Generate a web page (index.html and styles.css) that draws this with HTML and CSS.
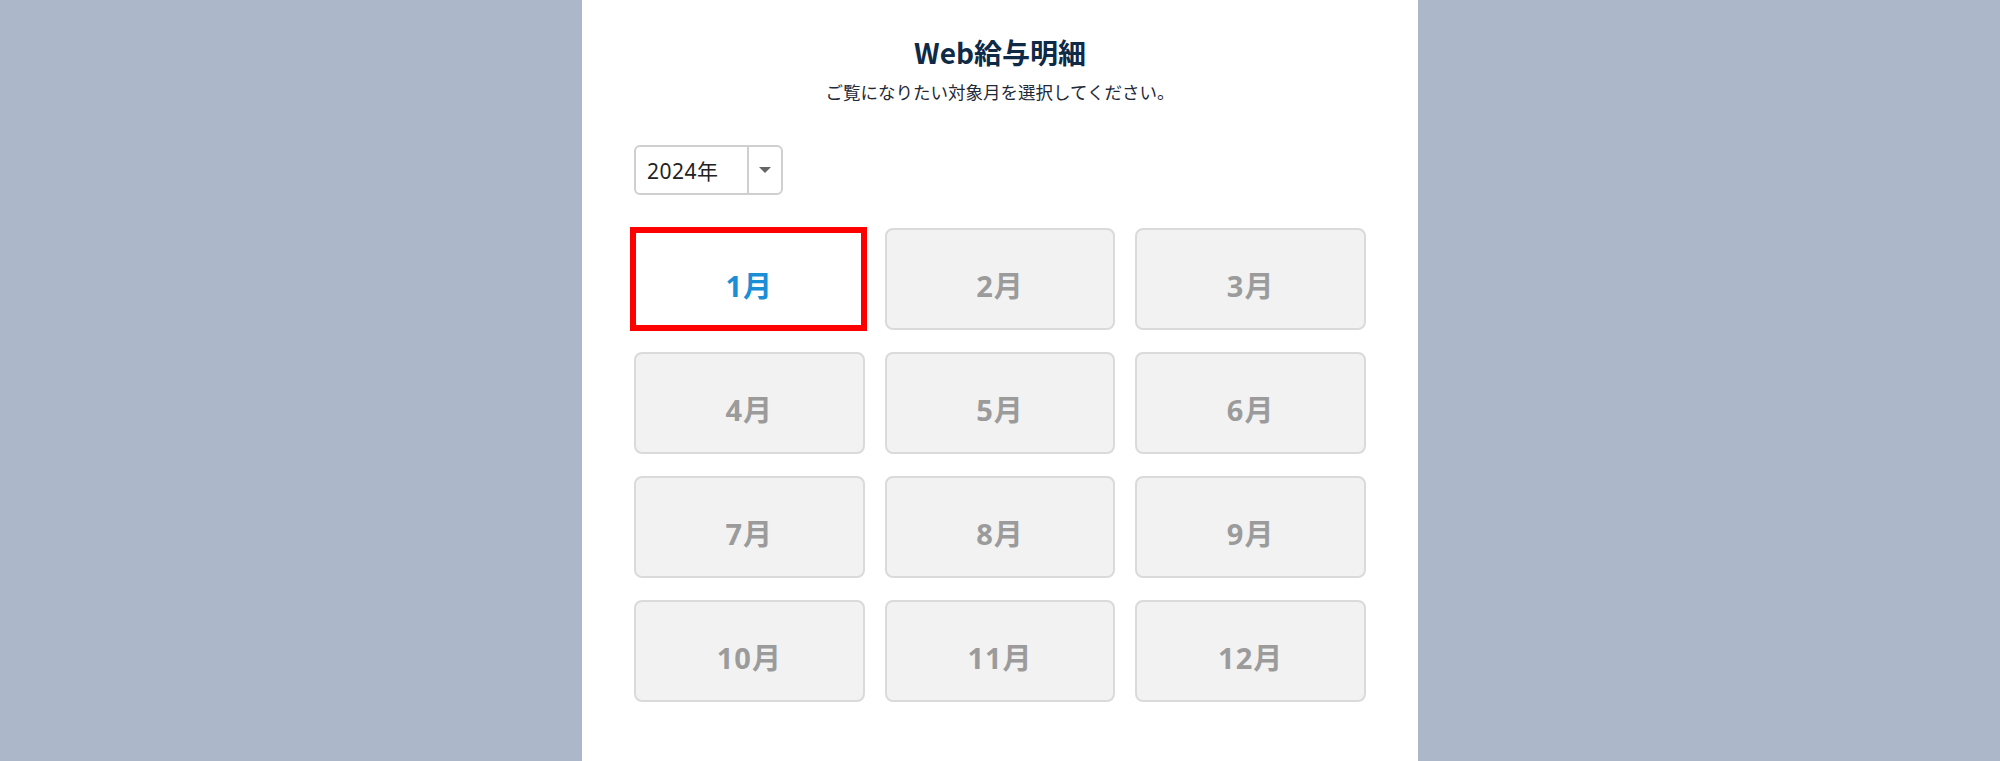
FILE: index.html
```html
<!DOCTYPE html>
<html lang="ja">
<head>
<meta charset="utf-8">
<title>Web給与明細</title>
<link rel="stylesheet" href="styles.css">
</head>
<body>
<main class="panel">
  <h1 class="title">Web給与明細</h1>
  <p class="lead">ご覧になりたい対象月を選択してください。</p>
  <div class="select">
    <span class="select-value">2024年</span>
    <span class="select-arrow"><span class="tri"></span></span>
  </div>
  <div class="months">
    <button class="month active">1月</button>
    <button class="month">2月</button>
    <button class="month">3月</button>
    <button class="month">4月</button>
    <button class="month">5月</button>
    <button class="month">6月</button>
    <button class="month">7月</button>
    <button class="month">8月</button>
    <button class="month">9月</button>
    <button class="month">10月</button>
    <button class="month">11月</button>
    <button class="month">12月</button>
  </div>
</main>
</body>
</html>
```

FILE: styles.css
```css
html, body {
  margin: 0;
  padding: 0;
  height: 100%;
}
body {
  background: #adb7ca;
  font-family: "Noto Sans CJK JP", "Noto Sans", sans-serif;
  overflow: hidden;
}
.panel {
  width: 836px;
  min-height: 100%;
  margin: 0 auto;
  background: #ffffff;
  box-sizing: border-box;
  padding: 34px 52px 0 52px;
}
.title {
  margin: 0;
  text-align: center;
  font-size: 28px;
  line-height: 36px;
  font-weight: 700;
  color: #0e2a47;
}
.lead {
  margin: 10px 0 0 0;
  text-align: center;
  font-size: 17.5px;
  line-height: 24px;
  color: #1f2a38;
}
.select {
  margin-top: 41px;
  width: 149px;
  height: 50px;
  box-sizing: border-box;
  border: 2px solid #cfcfcf;
  border-radius: 6px;
  display: flex;
  align-items: stretch;
  background: #fff;
}
.select-value {
  flex: 1;
  display: flex;
  align-items: center;
  padding-left: 11px;
  font-family: "Noto Sans", "Noto Sans CJK JP", sans-serif;
  font-size: 21px;
  letter-spacing: 0.5px;
  color: #222;
  border-right: 2px solid #cfcfcf;
}
.select-arrow {
  width: 32px;
  display: flex;
  align-items: center;
  justify-content: center;
}
.tri {
  width: 0;
  height: 0;
  border-left: 6px solid transparent;
  border-right: 6px solid transparent;
  border-top: 6px solid #666;
}
.months {
  margin-top: 33px;
  display: grid;
  grid-template-columns: repeat(3, 1fr);
  column-gap: 20px;
  row-gap: 22px;
}
.month {
  position: relative;
  height: 102px;
  box-sizing: border-box;
  border: 2px solid #dadada;
  border-radius: 8px;
  background: #f2f2f2;
  color: #9b9b9b;
  font-family: "Noto Sans", "Noto Sans CJK JP", sans-serif;
  font-size: 29px;
  letter-spacing: 1px;
  font-weight: 700;
  padding: 10px 0 0 0;
  display: flex;
  align-items: center;
  justify-content: center;
}
.month.active {
  background: #ffffff;
  color: #1a8fd6;
}
.month.active::after {
  content: "";
  position: absolute;
  left: -6px;
  top: -3px;
  right: -4px;
  bottom: -3px;
  border: 6px solid #ff0000;
}
```
